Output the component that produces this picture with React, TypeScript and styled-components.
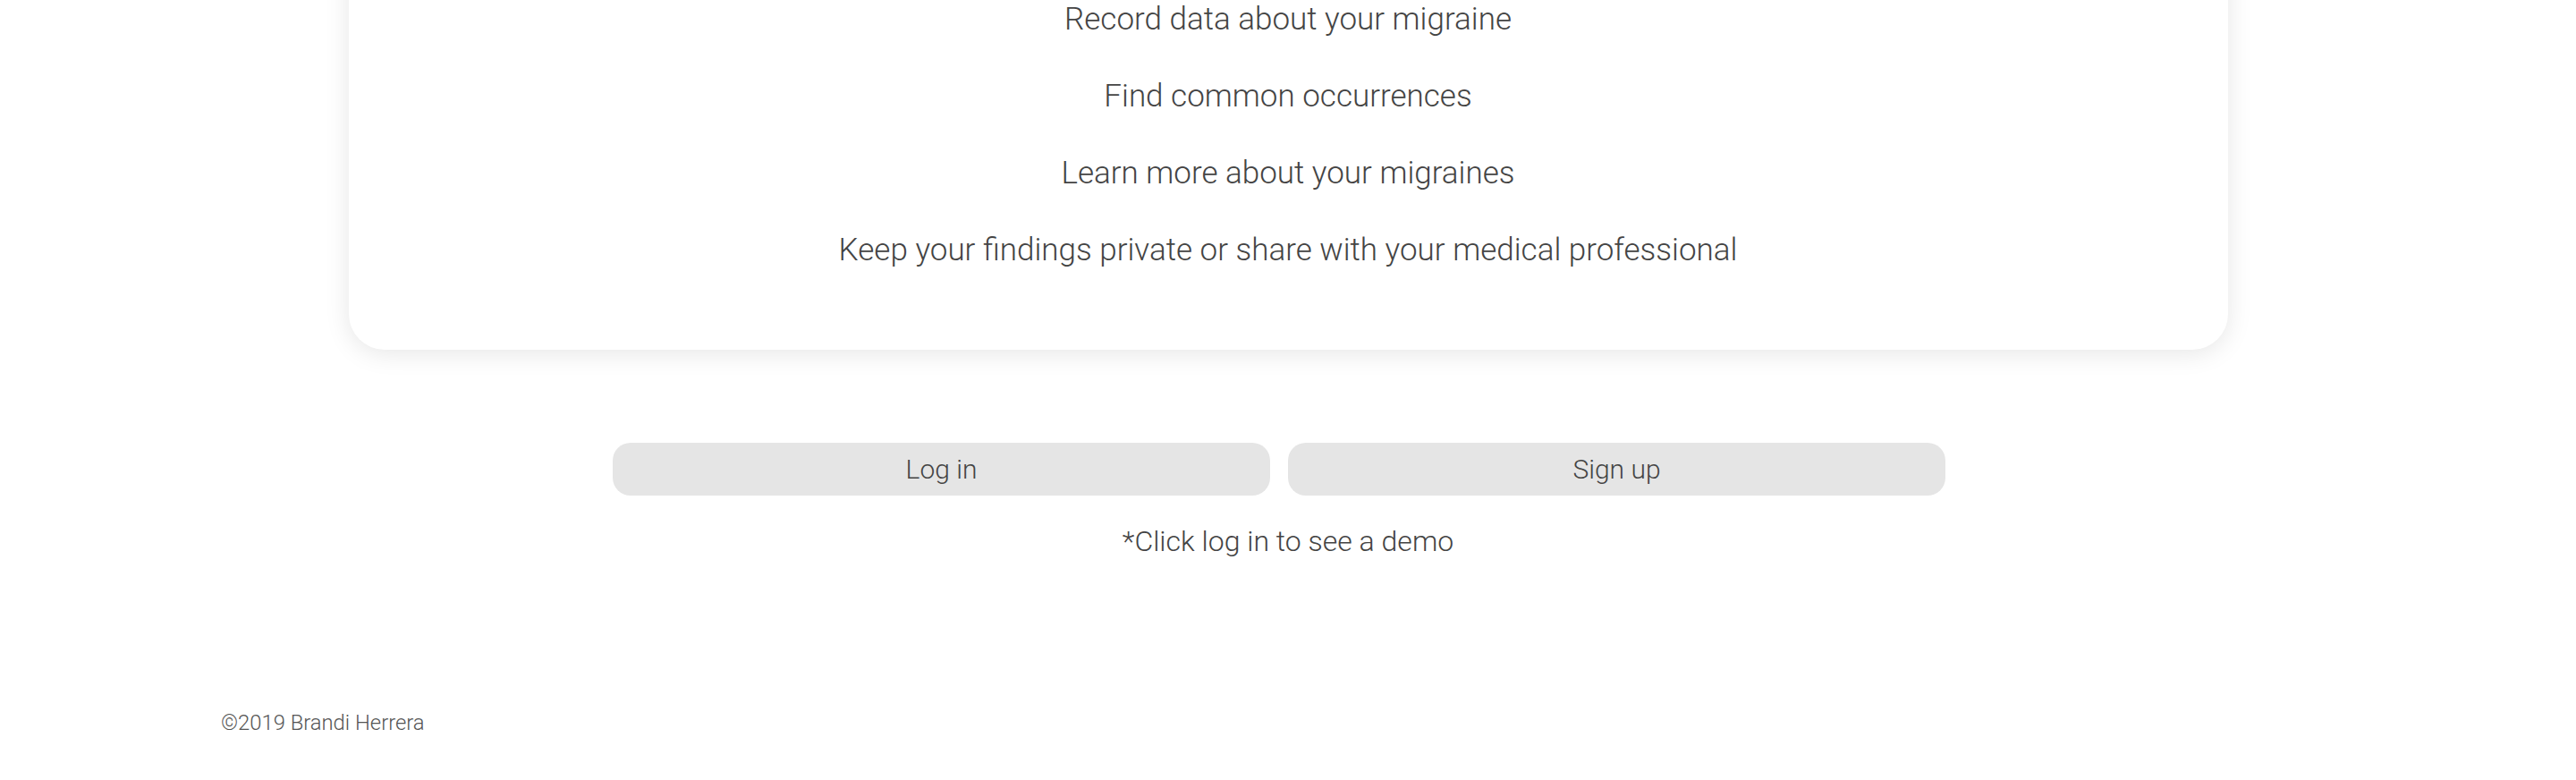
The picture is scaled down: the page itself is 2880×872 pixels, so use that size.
import React from "react";
import styled, { createGlobalStyle } from "styled-components";

const GlobalStyle = createGlobalStyle`
  html, body {
    margin: 0;
    padding: 0;
    background: #ffffff;
  }
  body {
    font-family: Roboto, "Noto Sans", "Liberation Sans", sans-serif;
    font-weight: 300;
    color: #444444;
  }
`;

const Page = styled.main`
  display: flex;
  flex-direction: column;
  align-items: center;
  width: 100%;
  min-height: 872px;
`;

const Card = styled.section`
  box-sizing: border-box;
  width: 2101px;
  margin-top: -99px;
  padding: 100px 40px 90px;
  background: #ffffff;
  border-radius: 40px;
  box-shadow: 0 4px 28px rgba(0, 0, 0, 0.1);
  display: flex;
  flex-direction: column;
  align-items: center;
  gap: 44px;
`;

const Feature = styled.p`
  margin: 0;
  font-size: 35px;
  line-height: 42px;
  font-weight: 300;
  color: #444444;
  text-align: center;
`;

const ButtonRow = styled.div`
  display: flex;
  justify-content: center;
  margin-top: 104px;
`;

const Button = styled.button`
  width: 735px;
  height: 59px;
  margin-right: 20px;
  border: none;
  border-radius: 20px;
  background: #e5e5e5;
  font-family: Roboto, "Noto Sans", sans-serif;
  font-weight: 300;
  font-size: 30px;
  color: #444444;
  cursor: pointer;
  padding: 0;
`;

const Note = styled.p`
  margin: 32px 0 0;
  font-size: 32px;
  line-height: 38px;
  font-weight: 300;
  color: #444444;
  text-align: center;
`;

const Footer = styled.footer`
  align-self: stretch;
  padding: 0 0 0 247px;
  margin-top: 170px;
  font-size: 23.8px;
  line-height: 28px;
  font-weight: 300;
  color: #555555;
`;

const features = [
  "Record data about your migraine",
  "Find common occurrences",
  "Learn more about your migraines",
  "Keep your findings private or share with your medical professional",
];

export default function App() {
  return (
    <>
      <GlobalStyle />
      <Page>
        <Card>
          {features.map((f) => (
            <Feature key={f}>{f}</Feature>
          ))}
        </Card>
        <ButtonRow>
          <Button>Log in</Button>
          <Button>Sign up</Button>
        </ButtonRow>
        <Note>*Click log in to see a demo</Note>
        <Footer>©2019 Brandi Herrera</Footer>
      </Page>
    </>
  );
}
